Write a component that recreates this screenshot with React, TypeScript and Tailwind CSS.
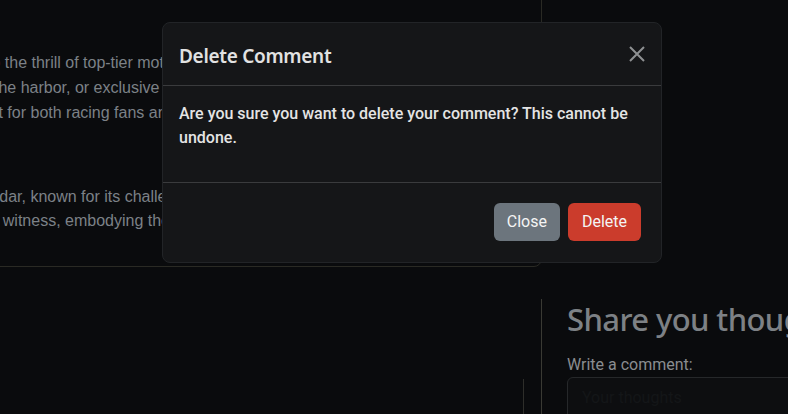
export default function App() {
  return (
    <div className="relative h-[414px] w-[788px] overflow-hidden bg-[#0a0b0d] font-['Liberation_Sans',Arial,sans-serif]">
      {/* article card, clipped at the left and top */}
      <div className="-ml-[40px] -mt-[20px] h-[287px] w-[582px] rounded-b-lg border border-[#2a2a24] pl-[40px] text-[16px] leading-[25px] text-[#7c8187]">
        <div className="pt-[69px]">
          <div className="-ml-[14px] whitespace-nowrap">
            <span className="text-[#8a2a22]">to</span> the thrill of top-tier motorsport racing on the streets
          </div>
          <div className="-ml-[7px] whitespace-nowrap">the harbor, or exclusive hospitality suites overlooking the track</div>
          <div className="-ml-[47px] whitespace-nowrap">perfect for both racing fans and those seeking luxury</div>
        </div>
        <div className="mt-[60px] leading-[24px]">
          <div className="-ml-[40px] whitespace-nowrap">calendar, known for its challenging layout and glamour</div>
          <div className="-ml-[16px] whitespace-nowrap">to witness, embodying the spirit of Formula 1</div>
        </div>
      </div>

      {/* lower part of the page */}
      <div className="mt-[32px] flex">
        <div className="w-[524px] shrink-0 pt-[80px]">
          <div className="h-[40px] border-r border-[#2e2e2a]" />
        </div>
        <div className="ml-[17px] shrink-0 border-l border-[#3a3a34] pl-[25px]">
          <h2 className="whitespace-nowrap font-['Noto_Sans',sans-serif] text-[31px] font-medium leading-[40px] tracking-[-0.6px] text-[#7d8185]">
            Share you thoughts
          </h2>
          <div className="mt-[14px] font-['Roboto',sans-serif] text-[16px] leading-[24px] text-[#8a8d90]">Write a comment:</div>
          <div className="h-[60px] w-[300px] rounded-md border border-[#26282a] bg-[#0d0e10] px-[14px] pt-[8px] font-['Roboto',sans-serif] text-[16px] text-[#141618]">
            Your thoughts
          </div>
        </div>
      </div>

      {/* modal */}
      <div className="absolute left-[162px] top-[22px] w-[500px] rounded-lg border border-[#222427] bg-[#151618] font-['Roboto',sans-serif]">
        <div className="flex items-center justify-between border-b border-[#3a3b3d] px-4 pb-[14px] pt-[18px]">
          <h5 className="font-['Noto_Sans',sans-serif] text-[19px] font-semibold leading-[30px] tracking-[-0.3px] text-[#e2e2e2]">
            Delete Comment
          </h5>
          <button className="-mt-[4px] text-[#8e9092]">
            <svg width="16" height="16" viewBox="0 0 16 16" fill="none" stroke="currentColor" strokeWidth="2">
              <path d="M1 1L15 15M15 1L1 15" />
            </svg>
          </button>
        </div>
        <div className="border-b border-[#3a3b3d] p-4">
          <p className="mb-4 text-[16px] font-medium leading-[24px] text-[#e4e4e4]">
            Are you sure you want to delete your comment? This cannot be undone.
          </p>
        </div>
        <div className="flex justify-end gap-2 px-5 pb-[21px] pt-[20px]">
          <button className="h-[38px] rounded-md bg-[#6c757d] px-[13px] text-[16px] text-[#f4f4f4]">Close</button>
          <button className="h-[38px] rounded-md bg-[#cb3c2c] px-[14px] text-[16px] text-[#f4f4f4]">Delete</button>
        </div>
      </div>
    </div>
  )
}
